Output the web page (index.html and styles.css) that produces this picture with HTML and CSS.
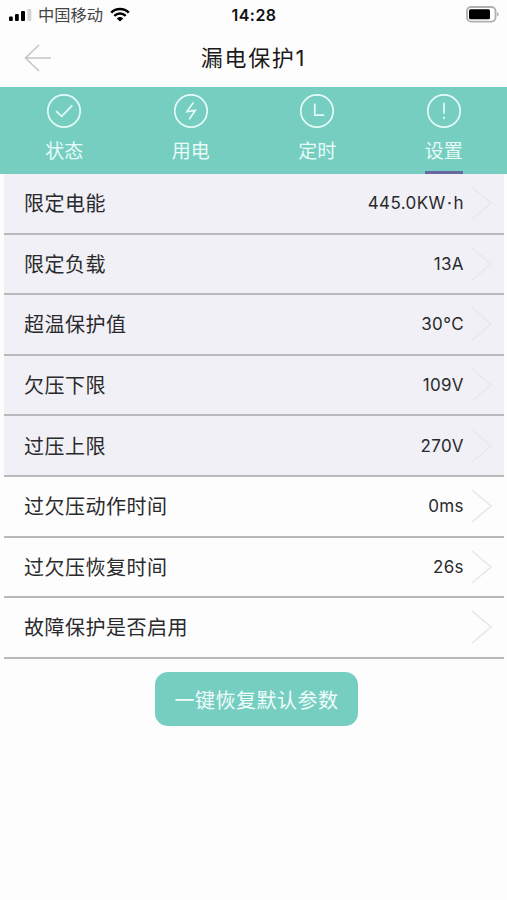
FILE: index.html
```html
<!DOCTYPE html>
<html lang="zh-CN">
<head>
    <meta charset="UTF-8">
    <meta name="viewport" content="width=device-width, initial-scale=1.0">
    <title>漏电保护1</title>
    <link rel="stylesheet" href="styles.css">
</head>
<body>
    <!-- 状态栏 -->
    <div class="status-bar">
        <div class="status-left">
            <svg class="signal" width="23" height="12" viewBox="0 0 23 12">
                <rect x="0" y="7.5" width="3.8" height="4.5" rx="1" fill="#000"/>
                <rect x="6" y="5" width="3.8" height="7" rx="1" fill="#000"/>
                <rect x="12" y="2" width="4" height="10" rx="1" fill="#000"/>
                <rect x="18.3" y="0" width="4" height="12" rx="1" fill="#d4d4d4"/>
            </svg>
            <span class="carrier">中国移动</span>
            <svg class="wifi" width="20" height="15" viewBox="0 0 20 15">
                <path d="M1.2 5.6a12.8 12.8 0 0 1 17.6 0M4.3 8.8a8.3 8.3 0 0 1 11.4 0" fill="none" stroke="#000" stroke-width="2.5"/>
                <path d="M6.8 11.4a4.7 4.7 0 0 1 6.4 0L10 14.6z" fill="#000"/>
            </svg>
        </div>
        <span class="time">14:28</span>
        <svg class="battery" width="33" height="17" viewBox="0 0 33 17">
            <rect x="1" y="1" width="28.5" height="14.6" rx="4" fill="#fff" stroke="#b0b0b0" stroke-width="1.8"/>
            <rect x="3" y="3.3" width="21" height="10" rx="1.5" fill="#000"/>
            <path d="M31 6.2q1.7.5 1.7 2t-1.7 2z" fill="#b0b0b0"/>
        </svg>
    </div>

    <div class="header">
        <svg class="back" width="28" height="28" viewBox="0 0 28 28">
            <path d="M15 1L1.5 14 15 27M1.5 14H27" fill="none" stroke="#c6c6c6" stroke-width="1.6"/>
        </svg>
        <h1 class="title">漏电保护1</h1>
    </div>

    <!-- 顶部标签 -->
    <div class="tabs">
        <div class="tab">
            <svg class="tab-icon" viewBox="0 0 36 36">
                <circle cx="18" cy="18" r="16.2"/>
                <path d="M10 18.2l5.7 5.2 10.6-11"/>
            </svg>
            <span>状态</span>
        </div>
        <div class="tab">
            <svg class="tab-icon" viewBox="0 0 36 36">
                <circle cx="18" cy="18" r="16.2"/>
                <path d="M20.4 9.6l-6.4 9 8.2-1.2-6 9"/>
            </svg>
            <span>用电</span>
        </div>
        <div class="tab">
            <svg class="tab-icon" viewBox="0 0 36 36">
                <circle cx="18" cy="18" r="16.2"/>
                <path d="M15.8 10.5v11.7h9.4"/>
            </svg>
            <span>定时</span>
        </div>
        <div class="tab active">
            <svg class="tab-icon" viewBox="0 0 36 36">
                <circle cx="18" cy="18" r="16.2"/>
                <path d="M18 9.8v11M18 23.7v2.2"/>
            </svg>
            <span>设置</span>
        </div>
    </div>

    <!-- 设置列表 -->
    <ul class="list">
        <li class="row gray"><span class="label">限定电能</span><span class="value">445.0KW<span class="dot">·</span>h</span><svg class="arrow" viewBox="0 0 20 34"><path d="M0 1l19 16L0 33"/></svg></li>
        <li class="row gray"><span class="label">限定负载</span><span class="value">13A</span><svg class="arrow" viewBox="0 0 20 34"><path d="M0 1l19 16L0 33"/></svg></li>
        <li class="row gray"><span class="label">超温保护值</span><span class="value">30°C</span><svg class="arrow" viewBox="0 0 20 34"><path d="M0 1l19 16L0 33"/></svg></li>
        <li class="row gray"><span class="label">欠压下限</span><span class="value">109V</span><svg class="arrow" viewBox="0 0 20 34"><path d="M0 1l19 16L0 33"/></svg></li>
        <li class="row gray"><span class="label">过压上限</span><span class="value">270V</span><svg class="arrow" viewBox="0 0 20 34"><path d="M0 1l19 16L0 33"/></svg></li>
        <li class="row"><span class="label">过欠压动作时间</span><span class="value">0ms</span><svg class="arrow" viewBox="0 0 20 34"><path d="M0 1l19 16L0 33"/></svg></li>
        <li class="row"><span class="label">过欠压恢复时间</span><span class="value">26s</span><svg class="arrow" viewBox="0 0 20 34"><path d="M0 1l19 16L0 33"/></svg></li>
        <li class="row"><span class="label">故障保护是否启用</span><span class="value"></span><svg class="arrow" viewBox="0 0 20 34"><path d="M0 1l19 16L0 33"/></svg></li>
    </ul>

    <button class="reset-button">一键恢复默认参数</button>
</body>
</html>
```
FILE: styles.css
```css
* {
    box-sizing: border-box;
}

body {
    margin: 0;
    background-color: #fdfdfd;
    color: #2a2a2c;
    font-family: Inter, "Noto Sans CJK SC", sans-serif;
}

/* 状态栏 */
.status-bar {
    display: grid;
    grid-template-columns: 1fr auto 1fr;
    align-items: center;
    height: 29px;
    padding: 0 8px 0 9px;
}

.status-left {
    display: flex;
    align-items: center;
}

.carrier {
    margin: 0 7px 0 6px;
    padding-top: 2px;
    font-size: 16.3px;
    line-height: 27px;
    color: #444;
}

.time {
    font-size: 16px;
    font-weight: 600;
    letter-spacing: 0.5px;
    color: #111;
}

.battery {
    justify-self: end;
    margin-top: -1px;
}

/* 标题 */
.header {
    display: grid;
    grid-template-columns: 60px 1fr 60px;
    align-items: center;
    height: 58px;
}

.back {
    margin-left: 24px;
}

.title {
    margin: 0;
    text-align: center;
    font-size: 22px;
    font-weight: 400;
    letter-spacing: 1.7px;
    line-height: 58px;
    color: #1a1a1a;
}

/* 标签栏 */
.tabs {
    display: flex;
    height: 87px;
    padding-left: 1px;
    background-color: #76cec1;
}

.tab {
    flex: 1;
    display: flex;
    flex-direction: column;
    align-items: center;
    padding-top: 6px;
    color: #e6fbf7;
    font-size: 19px;
    line-height: 28px;
}

.tab span {
    height: 45px;
    padding-top: 9px;
}

.tab.active span {
    border-bottom: 3px solid #66689f;
}

.tab-icon {
    flex: none;
    width: 36px;
    height: 36px;
    fill: none;
    stroke: #e6fbf7;
    stroke-width: 1.7;
}

/* 列表 */
.list {
    list-style: none;
    margin: 0 3px 0 4px;
    padding: 0;
}

.row {
    display: flex;
    align-items: center;
    height: 60.6px;
    padding: 0 12px 0 20px;
    border-bottom: 2px solid #b9b9bc;
}

.gray {
    background-color: #f0f0f6;
}

.label {
    flex: 1;
    padding-bottom: 1px;
    font-size: 20px;
    letter-spacing: 0.5px;
}

.value {
    font-size: 17px;
    letter-spacing: 0.4px;
}

.dot {
    margin: 0 1.3px;
}

.arrow {
    width: 20px;
    height: 34px;
    margin-left: 8px;
    fill: none;
    stroke: #e8e8eb;
    stroke-width: 1.6;
}

/* 恢复默认按钮 */
.reset-button {
    display: block;
    width: 203px;
    height: 54px;
    margin: 13px auto 0 155px;
    padding: 1px 0 0;
    border: none;
    border-radius: 13px;
    background-color: #76cec1;
    color: #f0fdfb;
    font-family: inherit;
    font-size: 20px;
    letter-spacing: 0.5px;
}
```
